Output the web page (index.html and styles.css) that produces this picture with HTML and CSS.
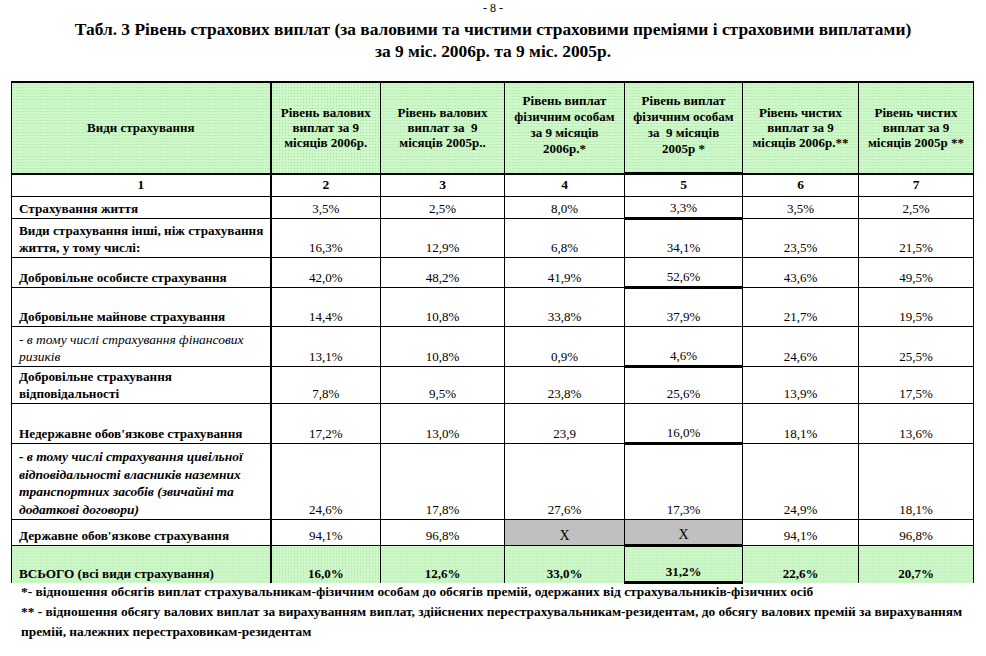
FILE: index.html
```html
<!DOCTYPE html>
<html lang="uk">
<head>
<meta charset="utf-8">
<title>Табл. 3</title>
<link rel="stylesheet" href="styles.css">
</head>
<body>
<div class="page">
  <div class="pagenum">- 8 -</div>
  <h1 class="title">Табл. 3 Рівень страхових виплат (за валовими та чистими страховими преміями і страховими виплатами)<br>за 9 міс. 2006р. та 9 міс. 2005р.</h1>
  <table class="tbl">
    <colgroup>
      <col class="c1"><col class="c2"><col class="c3"><col class="c4"><col class="c5"><col class="c6"><col class="c7">
    </colgroup>
    <tr class="hdr">
      <th>Види страхування</th>
      <th class="sep2">Рівень валових<br>виплат за 9<br>місяців 2006р.</th>
      <th>Рівень валових<br>виплат за&nbsp; 9<br>місяців 2005р..</th>
      <th class="four">Рівень виплат<br>фізичним особам<br>за 9 місяців<br>2006р.*</th>
      <th class="four k">Рівень виплат<br>фізичним особам<br>за&nbsp; 9 місяців<br>2005р *</th>
      <th>Рівень чистих<br>виплат за 9<br>місяців 2006р.**</th>
      <th>Рівень чистих<br>виплат за 9<br>місяців 2005р **</th>
    </tr>
    <tr class="nums h24">
      <td>1</td><td class="sep2">2</td><td>3</td><td>4</td><td>5</td><td>6</td><td>7</td>
    </tr>
    <tr class="h22">
      <td class="lbl">Страхування життя</td><td class="sep2">3,5%</td><td>2,5%</td><td>8,0%</td><td class="k">3,3%</td><td>3,5%</td><td>2,5%</td>
    </tr>
    <tr class="h39">
      <td class="lbl">Види страхування інші, ніж страхування<br>життя, у тому числі:</td><td class="sep2">16,3%</td><td>12,9%</td><td>6,8%</td><td>34,1%</td><td>23,5%</td><td>21,5%</td>
    </tr>
    <tr class="h30">
      <td class="lbl">Добровільне особисте страхування</td><td class="sep2">42,0%</td><td>48,2%</td><td>41,9%</td><td class="k">52,6%</td><td>43,6%</td><td>49,5%</td>
    </tr>
    <tr class="h39">
      <td class="lbl">Добровільне майнове страхування</td><td class="sep2">14,4%</td><td>10,8%</td><td>33,8%</td><td>37,9%</td><td>21,7%</td><td>19,5%</td>
    </tr>
    <tr class="h40">
      <td class="lbl it">- в тому числі страхування фінансових<br>ризиків</td><td class="sep2">13,1%</td><td>10,8%</td><td>0,9%</td><td class="k">4,6%</td><td>24,6%</td><td>25,5%</td>
    </tr>
    <tr class="h37">
      <td class="lbl">Добровільне страхування<br>відповідальності</td><td class="sep2">7,8%</td><td>9,5%</td><td>23,8%</td><td>25,6%</td><td>13,9%</td><td>17,5%</td>
    </tr>
    <tr class="h40">
      <td class="lbl">Недержавне обов'язкове страхування</td><td class="sep2">17,2%</td><td>13,0%</td><td>23,9</td><td class="k">16,0%</td><td>18,1%</td><td>13,6%</td>
    </tr>
    <tr class="h76">
      <td class="lbl it bi">- в тому числі страхування цивільної<br>відповідальності власників наземних<br>транспортних засобів (звичайні та<br>додаткові договори)</td><td class="sep2">24,6%</td><td>17,8%</td><td>27,6%</td><td>17,3%</td><td>24,9%</td><td>18,1%</td>
    </tr>
    <tr class="h26">
      <td class="lbl">Державне обов'язкове страхування</td><td class="sep2">94,1%</td><td>96,8%</td><td class="gray">X</td><td class="gray k">X</td><td>94,1%</td><td>96,8%</td>
    </tr>
    <tr class="total h36">
      <td class="lbl">ВСЬОГО (всі види страхування)</td><td class="sep2">16,0%</td><td>12,6%</td><td>33,0%</td><td class="k">31,2%</td><td>22,6%</td><td>20,7%</td>
    </tr>
  </table>
  <div class="notes">
    <p>*- відношення обсягів виплат страхувальникам-фізичним особам до обсягів премій, одержаних від страхувальників-фізичних осіб</p>
    <p>** - відношення обсягу валових виплат за вирахуванням виплат, здійснених перестрахувальникам-резидентам, до обсягу валових премій за вирахуванням премій, належних перестраховикам-резидентам</p>
  </div>
</div>
</body>
</html>
```

FILE: styles.css
```css
html, body {
  margin: 0;
  padding: 0;
  background: #ffffff;
}
body {
  font-family: "Liberation Serif", serif;
  color: #000;
}
.page {
  width: 986px;
  height: 656px;
  overflow: hidden;
}
.pagenum {
  text-align: center;
  font-size: 12px;
  line-height: 14px;
  height: 14px;
  padding-top: 1px;
}
.title {
  margin: 3px 0 0 0;
  text-align: center;
  font-size: 17.4px;
  line-height: 22px;
  font-weight: bold;
  height: 63px;
}
.tbl {
  margin-left: 11px;
  border-collapse: collapse;
  table-layout: fixed;
  width: 962px;
  font-size: 13px;
}
.c1 { width: 259px; }
.c2 { width: 110px; }
.c3 { width: 124px; }
.c4 { width: 120px; }
.c5 { width: 118px; }
.c6 { width: 116px; }
.c7 { width: 115px; }

.tbl th, .tbl td {
  border: 1px solid #000;
  padding: 0 3px 1px 3px;
  text-align: center;
  vertical-align: bottom;
  line-height: 16px;
  font-weight: normal;
  overflow: hidden;
  white-space: nowrap;
}
.tbl .sep2 {
  border-left: 2px solid #000;
}
.hdr th {
  height: 84px;
  background-color: #cdf8c8;
  background-image: radial-gradient(circle, rgba(60, 110, 60, 0.22) 0.7px, transparent 0.9px);
  background-size: 3px 3px;
  vertical-align: middle;
  font-size: 13px;
  line-height: 15px;
  font-weight: bold;
  border-top: 2px solid #000;
  border-bottom: 2px solid #000;
}
.hdr th.four {
  line-height: 16px;
  padding-bottom: 5px;
}
.hdr th.k {
  border-bottom: 3px solid #000;
}
.nums td {
  vertical-align: middle;
  font-size: 13.5px;
  font-weight: bold;
}
.h24 td { height: 20px; }
.h22 td { height: 19px; }
.h26 td { height: 23px; }
.h30 td { height: 27px; }
.h36 td { height: 33px; }
.h37 td { height: 34px; }
.h39 td { height: 36px; }
.h40 td { height: 37px; }
.h76 td { height: 73px; }

.tbl td.lbl {
  text-align: left;
  padding-left: 7px;
  padding-right: 2px;
  font-size: 13.2px;
  line-height: 17px;
  font-weight: bold;
}
.tbl td.it {
  font-style: italic;
  font-weight: normal;
  font-size: 13.5px;
}
.tbl td.bi {
  font-weight: bold;
  font-size: 13.5px;
  line-height: 17.5px;
}
.tbl td.k {
  border-bottom: 3px solid #000;
}
.gray {
  background: #c0c0c0;
  font-size: 14px;
}
.total td {
  background-color: #cdf8c8;
  background-image: radial-gradient(circle, rgba(60, 110, 60, 0.22) 0.7px, transparent 0.9px);
  background-size: 3px 3px;
  border-bottom: none;
  font-weight: bold;
}
.total td.k {
  border-bottom: 3px solid #000;
}
.notes {
  padding-left: 21px;
  padding-right: 8px;
  font-size: 13.4px;
  font-weight: bold;
  line-height: 20px;
  margin-top: -2px;
}
.notes p {
  margin: 0;
}
```
